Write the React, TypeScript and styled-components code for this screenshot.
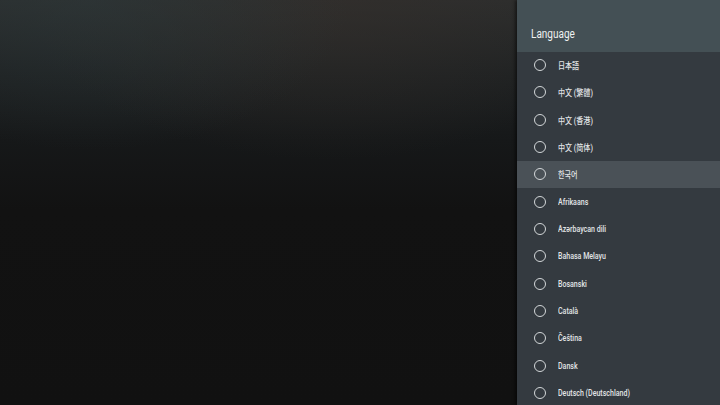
import styled, { createGlobalStyle } from "styled-components";

const GlobalStyle = createGlobalStyle`
  html, body {
    margin: 0;
    padding: 0;
    background: #111111;
  }
  body {
    font-family: Roboto, "Noto Sans", "Noto Sans CJK JP", "Noto Sans CJK KR", sans-serif;
  }
`;

const languages = [
  "日本語",
  "中文 (繁體)",
  "中文 (香港)",
  "中文 (简体)",
  "한국어",
  "Afrikaans",
  "Azərbaycan dili",
  "Bahasa Melayu",
  "Bosanski",
  "Català",
  "Čeština",
  "Dansk",
  "Deutsch (Deutschland)",
];

function App() {
  return (
    <Screen>
      <GlobalStyle />
      <Backdrop />
      <Panel>
        <PanelHeader>
          <Title>Language</Title>
        </PanelHeader>
        <List>
          {languages.map((lang, i) => (
            <Row key={lang} $focused={i === 4}>
              <Radio />
              <Label>{lang}</Label>
            </Row>
          ))}
        </List>
      </Panel>
    </Screen>
  );
}

const Screen = styled.div`
  display: flex;
  width: 720px;
  height: 405px;
  overflow: hidden;
`;

const Backdrop = styled.div`
  flex: 1;
  background:
    radial-gradient(ellipse 260px 150px at 90px 0px, rgba(44, 56, 58, 0.55), transparent),
    radial-gradient(ellipse 300px 160px at 330px 0px, rgba(52, 46, 42, 0.6), transparent),
    linear-gradient(180deg, #2c2e2e 0px, #1f2223 70px, #161819 140px, #121212 210px, #111111 405px);
`;

const Panel = styled.div`
  width: 203px;
  display: flex;
  flex-direction: column;
  background: #343a40;
  box-shadow: -2px 0 3px rgba(0, 0, 0, 0.5);
`;

const PanelHeader = styled.div`
  height: 51.5px;
  flex-shrink: 0;
  box-sizing: border-box;
  display: flex;
  align-items: center;
  padding: 16px 14px 0;
  background: #445055;
`;

const Title = styled.div`
  font-size: 12.5px;
  color: #eef0f1;
  transform: scaleX(0.8);
  transform-origin: left center;
`;

const List = styled.div`
  display: flex;
  flex-direction: column;
`;

const Row = styled.div<{ $focused: boolean }>`
  height: 27.33px;
  flex-shrink: 0;
  display: flex;
  align-items: center;
  padding-left: 17px;
  gap: 12px;
  background: ${({ $focused }) => ($focused ? "#4a5157" : "transparent")};
`;

const Radio = styled.div`
  width: 10px;
  height: 10px;
  flex-shrink: 0;
  border: 1.3px solid #d3d7d9;
  border-radius: 50%;
`;

const Label = styled.div`
  font-size: 8.6px;
  font-weight: 500;
  color: #e2e5e7;
  transform: scaleX(0.82);
  transform-origin: left center;
`;

export default App;
